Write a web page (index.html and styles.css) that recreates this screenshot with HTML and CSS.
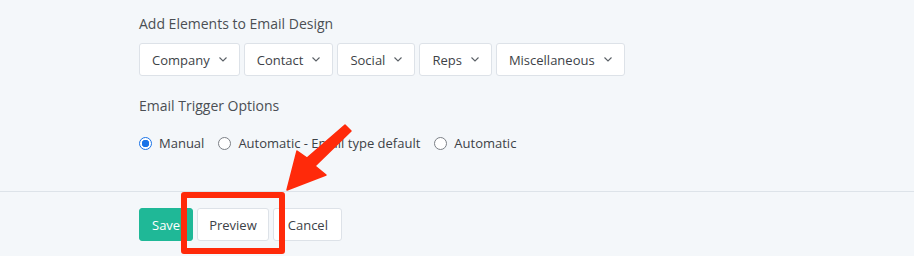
FILE: index.html
```html
<!DOCTYPE html>
<html lang="en">
<head>
    <meta charset="UTF-8">
    <title>Email Design</title>
    <link rel="stylesheet" href="styles.css">
</head>
<body>
  <div class="panel">
    <div class="section">
        <div class="label">Add Elements to Email Design</div>
        <div class="element-buttons">
            <button class="drop">Company <svg class="chev" width="8" height="5" viewBox="0 0 8 5"><path d="M0.5 0.5 L4 4 L7.5 0.5" fill="none" stroke="#5b6066" stroke-width="1.1"/></svg></button>
            <button class="drop">Contact <svg class="chev" width="8" height="5" viewBox="0 0 8 5"><path d="M0.5 0.5 L4 4 L7.5 0.5" fill="none" stroke="#5b6066" stroke-width="1.1"/></svg></button>
            <button class="drop">Social <svg class="chev" width="8" height="5" viewBox="0 0 8 5"><path d="M0.5 0.5 L4 4 L7.5 0.5" fill="none" stroke="#5b6066" stroke-width="1.1"/></svg></button>
            <button class="drop">Reps <svg class="chev" width="8" height="5" viewBox="0 0 8 5"><path d="M0.5 0.5 L4 4 L7.5 0.5" fill="none" stroke="#5b6066" stroke-width="1.1"/></svg></button>
            <button class="drop">Miscellaneous <svg class="chev" width="8" height="5" viewBox="0 0 8 5"><path d="M0.5 0.5 L4 4 L7.5 0.5" fill="none" stroke="#5b6066" stroke-width="1.1"/></svg></button>
        </div>

        <div class="label trigger-label">Email Trigger Options</div>
        <div class="radios">
            <label class="radio"><input type="radio" name="trigger" checked> Manual</label>
            <label class="radio"><input type="radio" name="trigger"> Automatic - Email type default</label>
            <label class="radio"><input type="radio" name="trigger"> Automatic</label>
        </div>
    </div>

    <div class="footer">
        <button class="btn btn-save">Save</button>
        <button class="btn">Preview</button>
        <button class="btn btn-cancel">Cancel</button>
    </div>
  </div>

  <!-- annotation overlay -->
  <div class="highlight"></div>
  <svg class="arrow" width="914" height="256" viewBox="0 0 914 256">
      <polygon points="345,125 307,158 297,151 287,190 326,175 315,166 351,131" fill="#ff2a0a" stroke="#ff2a0a" stroke-width="1.5" stroke-linejoin="round"/>
  </svg>
</body>
</html>
```

FILE: styles.css
```css
body {
    margin: 0;
    background-color: #f4f7fa;
    font-family: "Open Sans", "Noto Sans", sans-serif;
    font-size: 13px;
    color: #3d4247;
}

.panel {
    width: 914px;
    height: 256px;
    overflow: hidden;
}

.section {
    padding: 14px 139px 38px;
    border-bottom: 1px solid #dde3e9;
}

.label {
    font-size: 14px;
    line-height: 20px;
    color: #4b4f54;
}

.trigger-label {
    margin-top: 20px;
}

.element-buttons {
    display: flex;
    gap: 4px;
    margin-top: 9px;
}

.drop {
    display: flex;
    align-items: center;
    gap: 9px;
    height: 33px;
    padding: 0 12px;
    background: white;
    border: 1px solid #dde2e8;
    border-radius: 3px;
    font-family: inherit;
    font-size: 13px;
    color: #3d4247;
}

.chev {
    display: block;
    margin-top: -1px;
}

.radios {
    display: flex;
    gap: 14px;
    margin-top: 17px;
    line-height: 20px;
}

.radio {
    display: flex;
    align-items: center;
    gap: 7px;
    color: #3d4247;
}

.radio input {
    appearance: none;
    margin: 0;
    width: 13px;
    height: 13px;
    border: 1px solid #7b8086;
    border-radius: 50%;
    background: white;
}

.radio input:checked {
    border-color: #1b74e8;
    background: radial-gradient(circle, #1b74e8 0 3.5px, white 4px);
}

.footer {
    display: flex;
    gap: 4px;
    padding: 16px 139px;
}

.btn {
    height: 33px;
    padding: 0 11px;
    background: white;
    border: 1px solid #dde2e8;
    border-radius: 3px;
    font-family: inherit;
    font-size: 13px;
    color: #3d4247;
}

.btn-save {
    padding: 0 12px;
    background: #1fb897;
    border-color: #1fb897;
    color: white;
}

.btn-cancel {
    padding: 0 13px 0 14px;
}

.highlight {
    position: absolute;
    left: 181px;
    top: 192px;
    width: 92px;
    height: 50px;
    border: 6px solid #ff2a0a;
    border-radius: 3px;
}

.arrow {
    position: absolute;
    left: 0;
    top: 0;
}
```
